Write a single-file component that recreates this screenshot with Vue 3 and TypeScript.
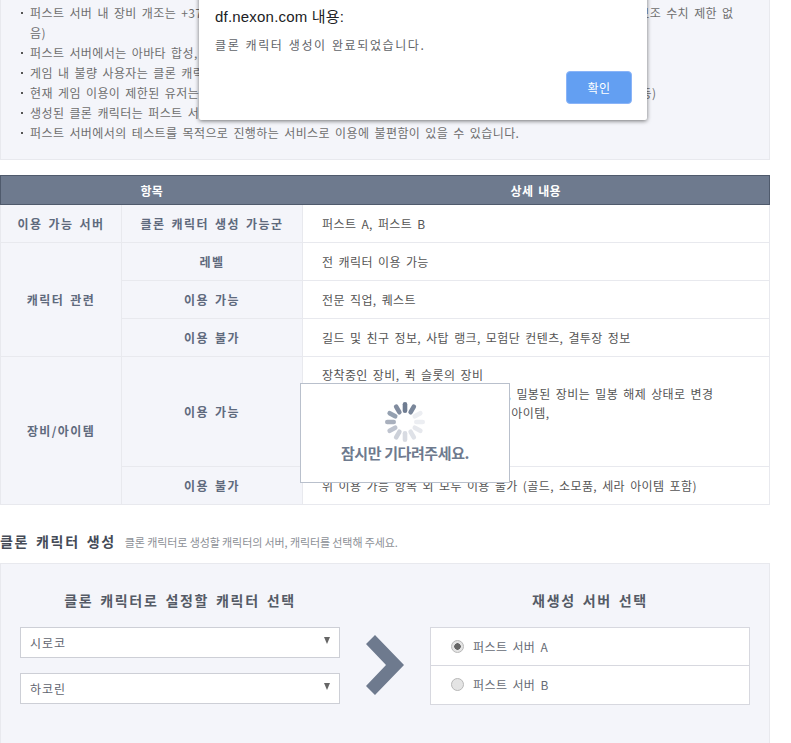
<script setup lang="ts">
const notes = [
  { text: '퍼스트 서버 내 장비 개조는 +37까지 가능하며, 증폭 및 강화 수치, 마법부여, 엠블렘 장착과 카드 장착 수치 등의, 보조 수치 제한 없음)' },
  { text: '퍼스트 서버에서는 아바타 합성, 장비 거래 등 일부 기능을 이용할 수 없습니다.' },
  { text: '게임 내 불량 사용자는 클론 캐릭터를 생성할 수 없습니다.' },
  { text: '현재 게임 이용이 제한된 유저는 클론 캐릭터를 생성할 수 없습니다. (계정 제재, 기간 제한, 이용 정지 접속 제한자 등)' },
  { text: '생성된 클론 캐릭터는 퍼스트 서버에서만 이용 가능합니다.' },
  { text: '퍼스트 서버에서의 테스트를 목적으로 진행하는 서비스로 이용에 불편함이 있을 수 있습니다.' }
]
const spokes = Array.from({ length: 12 }, (_, i) => {
  const colors = ['#6f7c91', '#79869a', '#eceef2', '#eceef2', '#e6e8ed', '#dfe2e8', '#d8dbe2', '#cdd1d9', '#bfc4cf', '#a9b0bd', '#94a0b0', '#818c9f']
  return { angle: i * 30, color: colors[i] }
})
const servers = [
  { label: '퍼스트 서버 A', on: true },
  { label: '퍼스트 서버 B', on: false }
]
</script>

<template>
  <div class="page">
    <section class="notice">
      <ul>
        <li v-for="n in notes" :key="n.text">{{ n.text }}</li>
      </ul>
    </section>

    <table class="info">
      <colgroup>
        <col class="c1" />
        <col class="c2" />
        <col />
      </colgroup>
      <thead>
        <tr>
          <th colspan="2">항목</th>
          <th>상세 내용</th>
        </tr>
      </thead>
      <tbody>
        <tr>
          <td class="label">이용 가능 서버</td>
          <td class="label">클론 캐릭터 생성 가능군</td>
          <td class="detail">퍼스트 A, 퍼스트 B</td>
        </tr>
        <tr>
          <td class="label" rowspan="3">캐릭터 관련</td>
          <td class="label">레벨</td>
          <td class="detail">전 캐릭터 이용 가능</td>
        </tr>
        <tr>
          <td class="label">이용 가능</td>
          <td class="detail">전문 직업, 퀘스트</td>
        </tr>
        <tr>
          <td class="label">이용 불가</td>
          <td class="detail">길드 및 친구 정보, 사탑 랭크, 모험단 컨텐츠, 결투장 정보</td>
        </tr>
        <tr>
          <td class="label" rowspan="2">장비/아이템</td>
          <td class="label">이용 가능</td>
          <td class="detail tall">
            장착중인 장비, 퀵 슬롯의 장비<br />
            귀속 상태의 장비 및 보관함 아이템, 밀봉된 장비는 밀봉 해제 상태로 변경<br />
            인벤토리에 보유 중인 소모품, 장비 아이템,<br />
            소모품 제외
          </td>
        </tr>
        <tr>
          <td class="label">이용 불가</td>
          <td class="detail">위 이용 가능 항목 외 모두 이용 불가 (골드, 소모품, 세라 아이템 포함)</td>
        </tr>
      </tbody>
    </table>

    <div class="title">
      <h2>클론 캐릭터 생성</h2>
      <span>클론 캐릭터로 생성할 캐릭터의 서버, 캐릭터를 선택해 주세요.</span>
    </div>

    <section class="create">
      <div class="left">
        <h3>클론 캐릭터로 설정할 캐릭터 선택</h3>
        <div class="select"><span>시로코</span><i></i></div>
        <div class="select"><span>하코린</span><i></i></div>
      </div>
      <svg class="chevron" width="38" height="60" viewBox="0 0 38 60" aria-hidden="true">
        <polygon points="0,9 9,0 38,30 9,60 0,51 20,30" fill="#6e7a8e" />
      </svg>
      <div class="right">
        <h3>재생성 서버 선택</h3>
        <div class="servers">
          <div v-for="s in servers" :key="s.label" class="server">
            <span class="radio" :class="{ on: s.on }"></span>
            <span>{{ s.label }}</span>
          </div>
        </div>
      </div>
    </section>

    <div class="alert">
      <p class="origin">df.nexon.com 내용:</p>
      <p class="msg">클론 캐릭터 생성이 완료되었습니다.</p>
      <button type="button">확인</button>
    </div>

    <div class="loading">
      <svg width="44" height="44" viewBox="-22 -22 44 44" aria-hidden="true">
        <rect
          v-for="s in spokes"
          :key="s.angle"
          x="-2.3"
          y="-20"
          width="4.6"
          height="11"
          rx="2.3"
          :fill="s.color"
          :transform="`rotate(${s.angle})`"
        />
      </svg>
      <strong>잠시만 기다려주세요.</strong>
    </div>
  </div>
</template>

<style>
html, body { margin: 0; background: #fff; overflow: hidden; }
</style>

<style scoped>
.page {
  position: relative;
  width: 770px;
  height: 743px;
  font-family: "Noto Sans CJK KR", "Liberation Sans", sans-serif;
  font-size: 12px;
  letter-spacing: 0.4px;
  word-spacing: 2px;
  color: #666;
}
.notice {
  box-sizing: border-box;
  height: 160px;
  padding: 3px 30px 0 19px;
  background: #f4f5fa;
  border: 1px solid #e8e9ee;
  border-top: 0;
}
ul { list-style: none; margin: 0; padding: 0; }
li {
  position: relative;
  padding-left: 10px;
  line-height: 20px;
  color: #6e6e6e;
}
li::before {
  content: "";
  position: absolute;
  left: 1px;
  top: 9px;
  width: 2px;
  height: 2px;
  background: #555;
}
.info {
  width: 770px;
  margin-top: 15px;
  border-collapse: collapse;
  table-layout: fixed;
}
.c1 { width: 121px; }
.c2 { width: 181px; }
th {
  height: 28px;
  padding: 0;
  background: #6e7a8e;
  border-top: 1px solid #4f5a6c;
  border-bottom: 1px solid #4f5a6c;
  color: #fff;
  font-size: 12px;
  font-weight: 700;
  letter-spacing: 0.3px;
}
th:first-child { border-left: 1px solid #4f5a6c; }
th:last-child { border-right: 1px solid #4f5a6c; }
td {
  height: 37px;
  padding: 0;
  border: 1px solid #e8e9ee;
}
.label {
  background: #f4f5fa;
  color: #5f6a7d;
  font-weight: 700;
  letter-spacing: 1.4px;
  text-align: center;
}
.detail { padding-left: 19px; color: #555; text-align: left; }
.tall {
  box-sizing: border-box;
  height: 110px;
  padding-top: 8px;
  line-height: 19px;
  vertical-align: top;
}
.title {
  display: flex;
  align-items: baseline;
  gap: 9px;
  height: 32px;
  margin-top: 26px;
}
.title h2 {
  margin: 0;
  font-size: 14px;
  font-weight: 700;
  letter-spacing: 1.7px;
  color: #454b57;
}
.title span {
  font-size: 11px;
  letter-spacing: -0.1px;
  word-spacing: 0;
  color: #8c8f96;
}
.create {
  box-sizing: border-box;
  display: flex;
  height: 180px;
  padding: 0 19px;
  background: #f4f5fa;
  border: 1px solid #e8e9ee;
  border-bottom: 0;
}
h3 {
  margin: 0;
  height: 63px;
  line-height: 72px;
  font-size: 14px;
  font-weight: 700;
  letter-spacing: 1.7px;
  text-align: center;
  color: #555b66;
}
.left { width: 320px; }
.right { width: 320px; margin-left: 26px; }
.select {
  box-sizing: border-box;
  display: flex;
  align-items: center;
  justify-content: space-between;
  height: 31px;
  margin-bottom: 15px;
  padding: 0 9px;
  background: #fff;
  border: 1px solid #cdcfd6;
  color: #5f6570;
  letter-spacing: 1px;
}
.select i {
  width: 0;
  height: 0;
  margin-top: -5px;
  border-left: 3px solid transparent;
  border-right: 3px solid transparent;
  border-top: 7px solid #666;
}
.chevron { flex: none; margin: 71px 0 0 26px; }
.servers {
  background: #fff;
  border: 1px solid #d7d8df;
}
.server {
  box-sizing: border-box;
  display: flex;
  align-items: center;
  gap: 9px;
  height: 37px;
  padding-left: 20px;
  color: #666b75;
}
.server + .server {
  height: 39px;
  padding-bottom: 1px;
  border-top: 1px solid #d7d8df;
}
.radio {
  box-sizing: border-box;
  width: 13px;
  height: 13px;
  border-radius: 50%;
  border: 1px solid #b8b8b8;
  background: #e4e4e4;
}
.radio.on {
  background: radial-gradient(circle, #666 0 3px, #e4e4e4 3.5px);
}
.alert {
  box-sizing: border-box;
  position: absolute;
  left: 199px;
  top: -10px;
  width: 448px;
  height: 130px;
  padding: 15px 16px 0;
  background: #fff;
  border-radius: 0 0 2px 2px;
  box-shadow: 0 1px 4px rgba(0, 0, 0, 0.55);
}
.origin {
  margin: 0;
  font-family: "Liberation Sans", "Noto Sans CJK KR", sans-serif;
  font-size: 15px;
  line-height: 24px;
  letter-spacing: 0.2px;
  word-spacing: 0;
  color: #202124;
}
.msg {
  margin: 6px 0 0;
  line-height: 20px;
  letter-spacing: 1.6px;
  word-spacing: 1px;
  color: #5f6368;
}
.alert button {
  position: absolute;
  right: 15px;
  bottom: 16px;
  width: 66px;
  height: 33px;
  padding: 0;
  border: 1px solid #8ab4f8;
  border-radius: 4px;
  background: #639ff2;
  color: #fff;
  font: inherit;
  letter-spacing: 0.4px;
}
.loading {
  box-sizing: border-box;
  position: absolute;
  left: 300px;
  top: 383px;
  width: 210px;
  height: 100px;
  padding-top: 16px;
  display: flex;
  flex-direction: column;
  align-items: center;
  background: #fff;
  border: 1px solid #b9c0cc;
}
.loading strong {
  margin-top: -2px;
  font-size: 15px;
  font-weight: 700;
  letter-spacing: -0.4px;
  word-spacing: 0;
  color: #6e7a8e;
}
</style>
